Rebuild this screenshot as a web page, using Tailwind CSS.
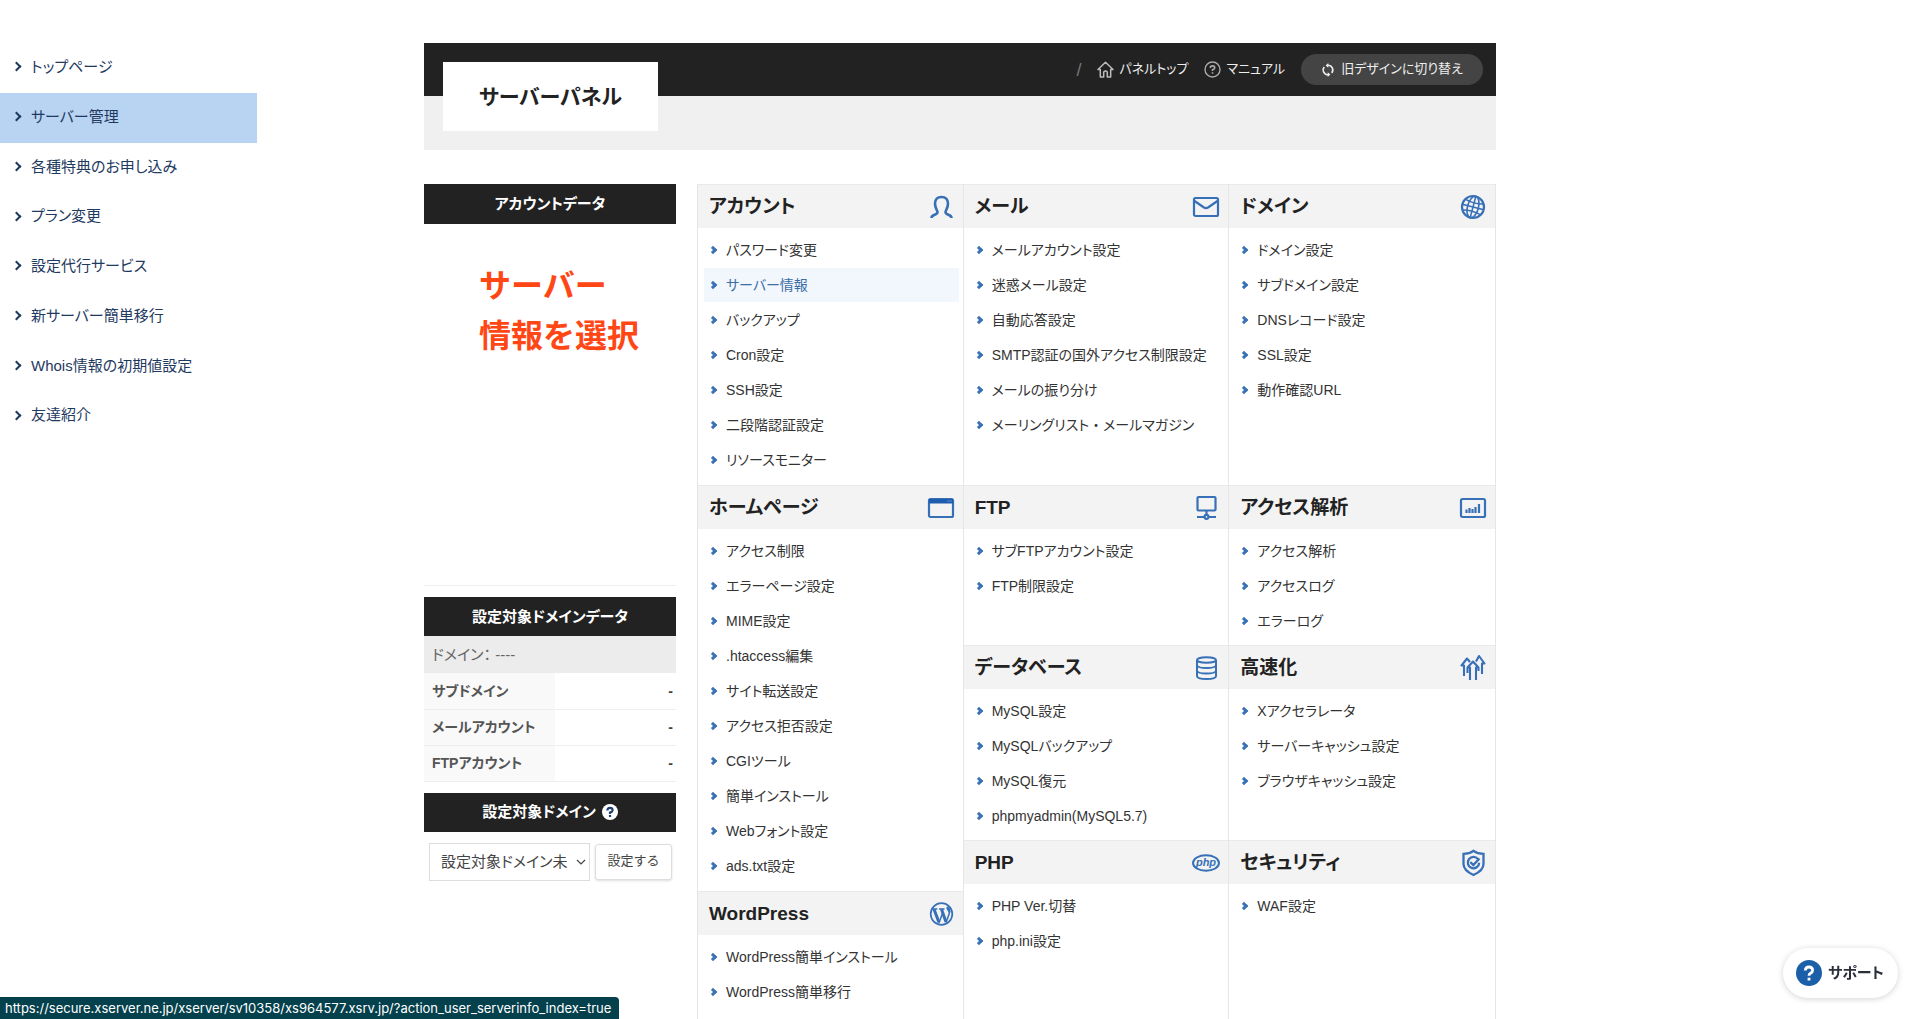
<!DOCTYPE html>
<html lang="ja">
<head>
<meta charset="utf-8">
<meta name="viewport" content="width=device-width, initial-scale=1">
<title>サーバーパネル</title>
<script src="https://cdn.jsdelivr.net/npm/@tailwindcss/browser@4"></script>
</head>
<body class="min-h-screen bg-white font-['Liberation_Sans','Noto_Sans_CJK_JP',sans-serif] text-sm text-[#333] [font-feature-settings:'palt']">

<div class="grid h-screen grid-cols-[1fr_1072px_1fr] overflow-hidden pt-[43px]">

  <!-- サイドメニュー -->
  <nav aria-label="メインメニュー" class="text-[15px] text-[#1f3a5f]">
    <ul class="grid h-[398px] w-[257px] auto-rows-fr [&_a]:flex [&_a]:h-full [&_a]:items-center [&_a]:gap-[11px] [&_a]:pb-0.5 [&_a]:pl-[13px] [&_a]:before:size-[7px] [&_a]:before:rotate-45 [&_a]:before:border-t-2 [&_a]:before:border-r-2 [&_a]:before:border-[#1f3a5f]">
      <li><a href="#">トップページ</a></li>
      <li class="bg-[#b9d3f3]"><a href="#" aria-current="page">サーバー管理</a></li>
      <li><a href="#">各種特典のお申し込み</a></li>
      <li><a href="#">プラン変更</a></li>
      <li><a href="#">設定代行サービス</a></li>
      <li><a href="#">新サーバー簡単移行</a></li>
      <li><a href="#">Whois情報の初期値設定</a></li>
      <li><a href="#">友達紹介</a></li>
    </ul>
  </nav>

  <div class="flex flex-col">
    <!-- ヘッダー -->
    <header class="flex items-start justify-between bg-[linear-gradient(#222_53px,#f0f0f0_53px)] pt-[11px] pr-[13px] pb-[19px] pl-[19px]">
      <h1 class="mt-2 flex h-[69px] w-[215px] items-center justify-center bg-white text-[21px] font-bold text-[#222]">サーバーパネル</h1>
      <div class="flex h-[31px] items-center text-[13px] text-[#eee]">
        <span class="mr-4 text-lg text-[#777]">/</span>
        <a href="#" class="mr-4 flex items-center gap-[5px]">
          <svg class="size-[17px]" viewBox="0 0 17 17" fill="none" stroke="#bbb" stroke-width="1.5" stroke-linejoin="round"><path d="M1 8.500 8.500 1.300 16 8.500H13.700V16H10.300V11Q8.500 9 6.700 11V16H3.300V8.500Z"/></svg>
          パネルトップ</a>
        <a href="#" class="mr-4 flex items-center gap-[5px]">
          <svg class="size-[17px]" viewBox="0 0 17 17" fill="none" stroke="#aaa" stroke-width="1.400"><circle cx="8.500" cy="8.500" r="7.500"/><path stroke-width="1.600" d="M6.300 7Q6.300 4.900 8.500 4.900T10.700 6.900Q10.700 8 8.500 8.700V10M8.500 11.200V12.800"/></svg>
          マニュアル</a>
        <button type="button" class="flex h-[31px] w-[182px] items-center justify-center gap-[6px] rounded-full bg-[#444]">
          <svg class="size-[14px]" viewBox="0 0 14 14" fill="none" stroke="#eee" stroke-width="1.600"><path d="M7 2.300A4.800 4.800 0 0 1 10.800 10M7 11.700A4.800 4.800 0 0 1 3.200 4"/><path fill="#eee" stroke="none" d="M7.300 0V4.800L4.600 2.400ZM6.700 9.200V14L9.400 11.600Z"/></svg>
          旧デザインに切り替え</button>
      </div>
    </header>

    <div class="mt-[34px] flex grow gap-[21px]">
      <!-- 左カラム -->
      <aside class="w-[252px] shrink-0">
        <section class="h-[402px] border-b border-[#eee]">
          <h2 class="flex h-10 items-center justify-center bg-[#222] text-[15px] font-bold text-white">アカウントデータ</h2>
          <p class="pt-[37px] pl-[55px] text-[32px] leading-[50px] font-bold text-[#ff4716] [font-feature-settings:normal]">サーバー<br>情報を選択</p>
        </section>

        <section class="mt-[11px]">
          <h2 class="flex h-[39px] items-center justify-center bg-[#222] text-[15px] font-bold text-white">設定対象ドメインデータ</h2>
          <p class="flex h-[37px] items-center bg-[#ececec] pl-2 text-[15px] text-[#666]">ドメイン： ----</p>
          <table class="w-full text-left text-[#444] [&_td]:pr-[3px] [&_td]:text-right [&_td]:font-bold [&_th]:w-[131px] [&_th]:bg-[#f9f9f9] [&_th]:pl-2 [&_th]:font-bold [&_th]:text-[#555] [&_tr]:h-9 [&_tr]:border-b [&_tr]:border-[#eee]">
            <tr><th scope="row">サブドメイン</th><td>-</td></tr>
            <tr><th scope="row">メールアカウント</th><td>-</td></tr>
            <tr><th scope="row">FTPアカウント</th><td>-</td></tr>
          </table>
        </section>

        <section class="mt-[11px]">
          <h2 class="flex h-[39px] items-center justify-center gap-[6px] bg-[#222] text-[15px] font-bold text-white"><label for="domain">設定対象ドメイン</label>
            <svg class="size-4" viewBox="0 0 16 16"><circle cx="8" cy="8" r="8" fill="#fff"/><path fill="none" stroke="#1c3f73" stroke-width="2.200" d="M5.400 6.400Q5.400 3.900 8 3.900T10.600 6.200Q10.600 7.600 8 8.600V10M8 11V13"/></svg>
          </h2>
          <form class="flex items-center gap-[5px] pt-[11px] pr-1 pl-[5px]">
            <div class="relative w-[161px]">
              <select id="domain" class="h-[38px] w-full appearance-none rounded-none border border-[#ddd] bg-white pl-[11px] text-[15px] text-[#444] [font-feature-settings:'palt']"><option>設定対象ドメイン未</option></select>
              <svg class="pointer-events-none absolute top-[15px] right-1 h-2 w-[10px]" viewBox="0 0 10 8" fill="none" stroke="#444" stroke-width="1.200"><path d="M1 2 5 6 9 2"/></svg>
            </div>
            <button type="button" class="h-9 grow rounded-[3px] border border-[#ddd] bg-white text-[13px] text-[#444] shadow-sm [font-feature-settings:normal]">設定する</button>
          </form>
        </section>
      </aside>

      <!-- メニュー一覧 -->
      <main class="flex grow flex-col border-r border-l border-[#e6e6e6] text-[#333] [&_a]:flex [&_a]:h-[34px] [&_a]:items-center [&_a]:gap-[10px] [&_a]:pl-1.5 [&_a]:before:size-[6px] [&_a]:before:rotate-45 [&_a]:before:border-t-[3px] [&_a]:before:border-r-[3px] [&_a]:before:border-[#3a72b5] [&_h2]:flex [&_h2]:h-11 [&_h2]:items-center [&_h2]:justify-between [&_h2]:border-t [&_h2]:border-[#e9e9e9] [&_h2]:bg-[#f3f3f3] [&_h2]:pr-2 [&_h2]:pl-[11px] [&_h2]:text-[19px] [&_h2]:font-bold [&_h2]:text-[#222] [&_li]:h-[35px] [&_svg]:h-7 [&_svg]:w-7 [&_svg]:fill-none [&_svg]:stroke-[#3770b7] [&_ul]:pt-[5px] [&_ul]:pr-1 [&_ul]:pl-1.5">
        <div class="grid grid-cols-3 divide-x divide-[#e6e6e6]">
          <section>
            <h2>アカウント<svg viewBox="0 0 28 28" stroke-width="2.600"><path d="M4.500 25C4.500 21 10.500 22.500 10.500 19C10.500 17.500 8 15.500 8 10.500C8 6.500 10.500 4 14.500 4S21 6.500 21 10.500C21 15.500 18.500 17.500 18.500 19C18.500 22.500 24.500 21 24.500 25"/></svg></h2>
            <ul class="pb-[7px]">
              <li><a href="#">パスワード変更</a></li>
              <li><a href="#" class="bg-[#f2f6fd] text-[#3a6ea5]">サーバー情報</a></li>
              <li><a href="#">バックアップ</a></li>
              <li><a href="#">Cron設定</a></li>
              <li><a href="#">SSH設定</a></li>
              <li><a href="#">二段階認証設定</a></li>
              <li><a href="#">リソースモニター</a></li>
            </ul>
          </section>
          <section>
            <h2>メール<svg viewBox="0 0 28 28" stroke-width="2.200"><rect x="2" y="5" width="24" height="18" rx="1.500"/><path d="M2.500 8 12 14.500Q14 15.700 16 14.500L25.500 8"/></svg></h2>
            <ul>
              <li><a href="#">メールアカウント設定</a></li>
              <li><a href="#">迷惑メール設定</a></li>
              <li><a href="#">自動応答設定</a></li>
              <li><a href="#">SMTP認証の国外アクセス制限設定</a></li>
              <li><a href="#">メールの振り分け</a></li>
              <li><a href="#"><span>メーリングリスト<span class="[font-feature-settings:normal]">・</span>メールマガジン</span></a></li>
            </ul>
          </section>
          <section>
            <h2>ドメイン<svg viewBox="0 0 28 28" stroke-width="1.600"><circle cx="14" cy="14" r="11" stroke-width="2.200"/><g transform="rotate(15 14 14)"><ellipse cx="14" cy="14" rx="5.500" ry="11"/><path d="M14 3V25M3 14H25M5 8.500Q14 11 23 8.500M5 19.500Q14 17 23 19.500"/></g></svg></h2>
            <ul>
              <li><a href="#">ドメイン設定</a></li>
              <li><a href="#">サブドメイン設定</a></li>
              <li><a href="#">DNSレコード設定</a></li>
              <li><a href="#">SSL設定</a></li>
              <li><a href="#">動作確認URL</a></li>
            </ul>
          </section>
        </div>

        <div class="grid grow grid-cols-3">
          <div class="border-r border-[#e6e6e6]">
            <section>
              <h2>ホームページ<svg viewBox="0 0 28 28" stroke-width="2.200"><rect x="2" y="5" width="24" height="18" rx="1.500"/><path class="fill-[#1f5cae]" stroke="none" d="M2 5H26V9.500H2Z"/><path class="stroke-white/60!" stroke-width="1" stroke-dasharray="1 1" d="M20.500 7H25"/></svg></h2>
              <ul class="pb-[7px]">
                <li><a href="#">アクセス制限</a></li>
                <li><a href="#">エラーページ設定</a></li>
                <li><a href="#">MIME設定</a></li>
                <li><a href="#">.htaccess編集</a></li>
                <li><a href="#">サイト転送設定</a></li>
                <li><a href="#">アクセス拒否設定</a></li>
                <li><a href="#">CGIツール</a></li>
                <li><a href="#">簡単インストール</a></li>
                <li><a href="#">Webフォント設定</a></li>
                <li><a href="#">ads.txt設定</a></li>
              </ul>
            </section>
            <section>
              <h2>WordPress<svg viewBox="0 0 28 28"><circle cx="14.500" cy="14" r="10.800" stroke-width="1.700"/><path stroke-width="3" d="M7 9.300 12 22.500M14.500 9.300 19 22"/><path stroke-width="1.500" d="M4.800 9H10.300M12 9H17.500M12 22.800 15.500 13.500M19 22.500 22.300 13.500Q23 11 21.500 9"/><path class="fill-[#3770b7]" stroke="none" d="M20 6.500Q23.500 7 23.500 12L21.800 15Q22.300 12 20.500 10.500Q18.500 7.500 20 6.500Z"/></svg></h2>
              <ul>
                <li><a href="#">WordPress簡単インストール</a></li>
                <li><a href="#">WordPress簡単移行</a></li>
              </ul>
            </section>
          </div>

          <div class="col-span-2 grid grid-cols-2 grid-rows-[160px_195px_1fr] [&>section:nth-child(odd)]:border-r [&>section:nth-child(odd)]:border-[#e6e6e6]">
            <section>
              <h2>FTP<svg viewBox="0 0 28 28" stroke-width="2.200"><rect x="5.500" y="3" width="18" height="13.500" rx="1"/><path d="M14.500 17V21M5 23H12.500M16.500 23H24"/><circle cx="14.500" cy="22.800" r="2"/></svg></h2>
              <ul>
                <li><a href="#">サブFTPアカウント設定</a></li>
                <li><a href="#">FTP制限設定</a></li>
              </ul>
            </section>
            <section>
              <h2>アクセス解析<svg viewBox="0 0 28 28" stroke-width="2.200"><rect x="2" y="5" width="24" height="18" rx="1.500"/><path d="M7.500 19V15.500M10.500 19V14M13.500 19V15M16.500 19V13M20 19V10"/></svg></h2>
              <ul>
                <li><a href="#">アクセス解析</a></li>
                <li><a href="#">アクセスログ</a></li>
                <li><a href="#">エラーログ</a></li>
              </ul>
            </section>
            <section>
              <h2>データベース<svg viewBox="0 0 28 28" stroke-width="2"><ellipse cx="14.500" cy="6" rx="9.500" ry="2.800"/><path d="M5 6V22Q5 25 14.500 25T24 22V6M5 11.500Q6 14 14.500 14T24 11.500M5 17Q6 19.500 14.500 19.500T24 17"/></svg></h2>
              <ul>
                <li><a href="#">MySQL設定</a></li>
                <li><a href="#">MySQLバックアップ</a></li>
                <li><a href="#">MySQL復元</a></li>
                <li><a href="#">phpmyadmin(MySQL5.7)</a></li>
              </ul>
            </section>
            <section>
              <h2>高速化<svg viewBox="0 0 28 28" stroke-width="2.100" stroke-linejoin="round"><path d="M11 26V13.500H8.500L14 7.500 19.500 13.500H17V26M5 22V11.500H2.500L8 4.500 11 8M8.500 19V14M17 7.500 20 2 25.500 9.500H23V20M19.500 17V14"/></svg></h2>
              <ul>
                <li><a href="#">Xアクセラレータ</a></li>
                <li><a href="#">サーバーキャッシュ設定</a></li>
                <li><a href="#">ブラウザキャッシュ設定</a></li>
              </ul>
            </section>
            <section>
              <h2>PHP<svg viewBox="0 0 28 28" stroke-width="2"><ellipse cx="14" cy="14" rx="13" ry="7.800"/><text x="14" y="17" text-anchor="middle" font-size="11" font-weight="bold" font-style="italic" class="fill-[#3770b7]" stroke="none">php</text></svg></h2>
              <ul>
                <li><a href="#">PHP Ver.切替</a></li>
                <li><a href="#">php.ini設定</a></li>
              </ul>
            </section>
            <section>
              <h2>セキュリティ<svg viewBox="0 0 28 28" stroke-width="2.300"><path d="M14.500 1.800Q18.500 4.800 24.500 4.800V15C24.500 20.500 20 23.500 14.500 26C9 23.500 4.500 20.500 4.500 15V4.800Q10.500 4.800 14.500 1.800Z"/><path d="M19.300 10.500A5.700 5.700 0 1 0 20.200 13.800M11.300 13 14.300 16 20.500 9.500"/></svg></h2>
              <ul>
                <li><a href="#">WAF設定</a></li>
              </ul>
            </section>
          </div>
        </div>
      </main>
    </div>
  </div>
</div>

<!-- サポートボタン -->
<button type="button" class="fixed right-[22px] bottom-[21px] flex h-[50px] w-[115px] items-center gap-[6px] rounded-full bg-white pl-[13px] text-[15px] font-bold text-[#2b2f3a] shadow-[0_1px_6px_rgba(0,0,0,0.18)]">
  <svg class="size-[26px]" viewBox="0 0 26 26"><circle cx="13" cy="13" r="13" fill="#1c5fa9"/><path fill="none" stroke="#fff" stroke-width="2.800" d="M9.300 10.500Q9.500 7 13 7T16.600 10.200Q16.600 12 14.500 13.200Q13 14 13 15.800M13 17.700V20.500"/></svg>
  サポート</button>

<!-- リンク先の表示 -->
<div class="fixed bottom-0 left-0 flex h-[22px] items-center rounded-tr-[4px] bg-[#04414d] pr-2 pl-[5px] font-['Inter',sans-serif] text-[13px] text-white">https://secure.xserver.ne.jp/xserver/sv10358/xs964577.xsrv.jp/?action_user_serverinfo_index=true</div>

</body>
</html>
